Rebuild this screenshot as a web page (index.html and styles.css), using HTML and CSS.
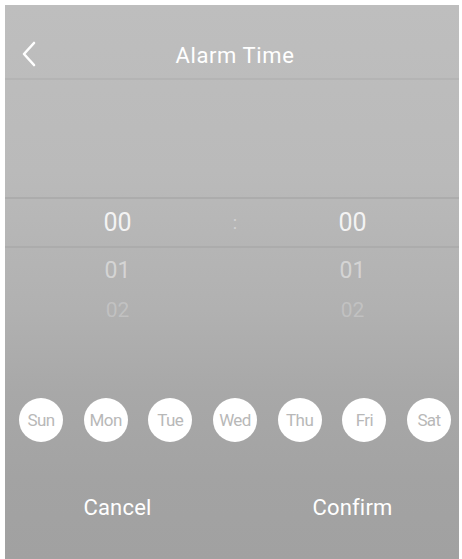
FILE: index.html
```html
<!DOCTYPE html>
<html>
<head>
<meta charset="utf-8">
<link rel="stylesheet" href="styles.css">
</head>
<body>
<div class="panel">
  <div class="inner">
    <header class="header">
      <svg class="back" width="14" height="26" viewBox="0 0 14 26"><path d="M12 2 L2 13 L12 24" fill="none" stroke="#fff" stroke-width="2.6" stroke-linecap="round" stroke-linejoin="round"/></svg>
      <h1 class="title">Alarm Time</h1>
    </header>
    <div class="picker">
      <div class="spacer"></div>
      <div class="row selected">
        <span class="cell">00</span><span class="colon">:</span><span class="cell">00</span>
      </div>
      <div class="row r2">
        <span class="cell">01</span><span class="colon"></span><span class="cell">01</span>
      </div>
      <div class="row r3">
        <span class="cell">02</span><span class="colon"></span><span class="cell">02</span>
      </div>
    </div>
    <div class="days">
      <span class="day">Sun</span>
      <span class="day">Mon</span>
      <span class="day">Tue</span>
      <span class="day">Wed</span>
      <span class="day">Thu</span>
      <span class="day">Fri</span>
      <span class="day">Sat</span>
    </div>
    <div class="actions">
      <span class="btn">Cancel</span>
      <span class="btn">Confirm</span>
    </div>
  </div>
</div>
</body>
</html>
```
FILE: styles.css
```css
html, body {
  margin: 0;
  padding: 0;
  background: #fff;
  overflow: hidden;
}
body {
  padding: 5px 0 0 5px;
  font-family: Roboto, "Liberation Sans", sans-serif;
}
.panel {
  width: 454px;
  height: 554px;
  overflow: hidden;
  background: linear-gradient(#bebebe 0%, #bababa 30%, #b1b1b1 55%, #a8a8a8 70%, #a3a3a3 85%, #a1a1a1 100%);
}
.inner {
  width: 470px;
  margin-left: -5px;
  display: flex;
  flex-direction: column;
}
.header {
  height: 46px;
  margin-top: 27px;
  border-bottom: 2px solid #b4b4b4;
  display: flex;
  align-items: center;
  justify-content: center;
  position: relative;
}
.back {
  position: absolute;
  left: 22px;
  top: 9px;
}
.title {
  margin: 0;
  font-size: 22px;
  font-weight: 400;
  color: #fff;
  letter-spacing: 0.6px;
}
.picker {
  height: 300px;
  display: flex;
  flex-direction: column;
}
.spacer {
  height: 117px;
}
.row {
  display: grid;
  grid-template-columns: 1fr 0 1fr;
  align-items: center;
  justify-items: center;
  color: #fff;
}
.selected {
  height: 47px;
  border-top: 2px solid #acacac;
  border-bottom: 2px solid #acacac;
  font-size: 25px;
  color: rgba(255, 255, 255, 0.85);
}
.r2 {
  height: 44px;
  font-size: 23px;
  color: rgba(255, 255, 255, 0.45);
}
.r3 {
  height: 36px;
  font-size: 21px;
  color: rgba(255, 255, 255, 0.22);
}
.colon {
  font-size: 18px;
  color: rgba(255, 255, 255, 0.4);
}
.days {
  height: 80px;
  display: flex;
  align-items: center;
  justify-content: space-between;
  padding: 0 19px;
}
.day {
  width: 44px;
  height: 44px;
  border-radius: 50%;
  background: #fff;
  display: flex;
  align-items: center;
  justify-content: center;
  font-size: 17px;
  color: #b8b8b8;
  letter-spacing: -0.6px;
}
.actions {
  height: 94px;
  display: grid;
  grid-template-columns: 1fr 1fr;
  align-items: center;
  justify-items: center;
}
.btn {
  font-size: 22px;
  color: #fff;
  letter-spacing: 0.2px;
}
```
